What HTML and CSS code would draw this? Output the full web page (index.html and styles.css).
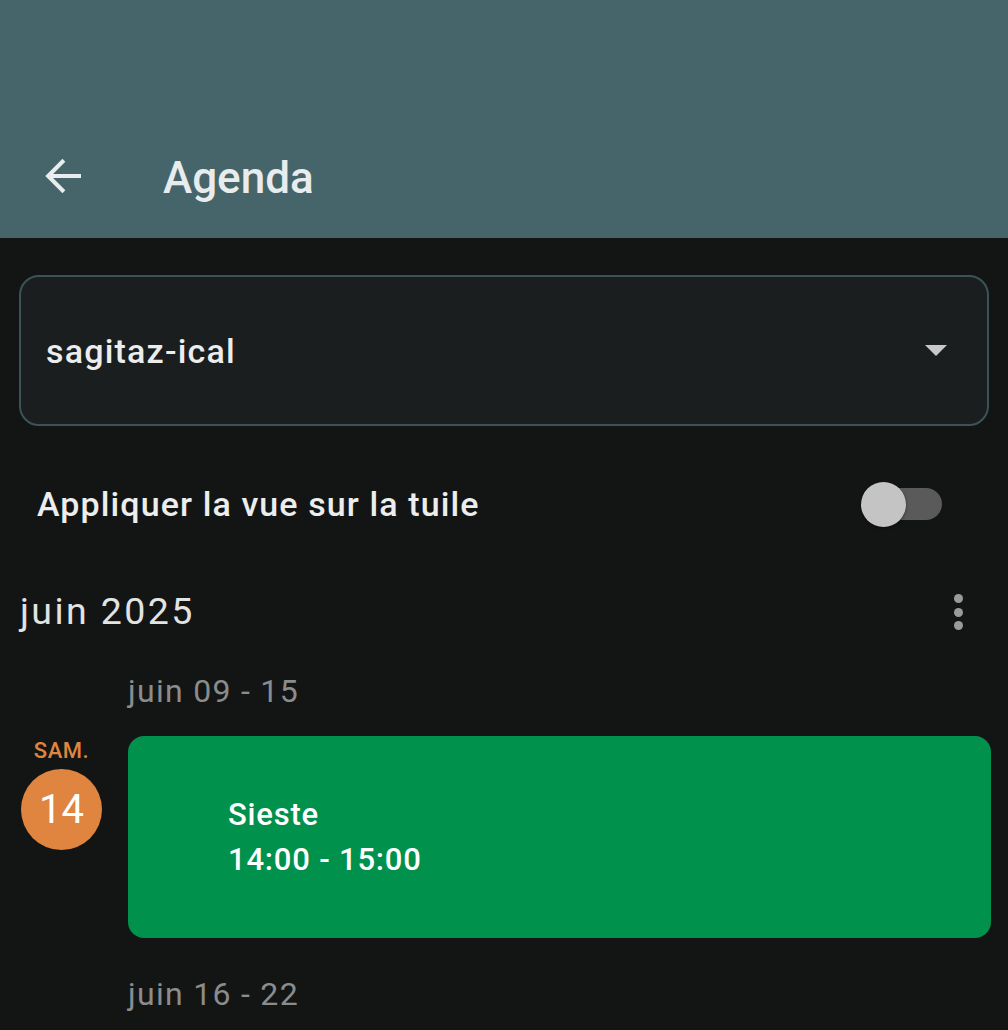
FILE: index.html
```html
<!DOCTYPE html>
<html lang="fr">
<head>
<meta charset="utf-8">
<title>Agenda</title>
<link rel="stylesheet" href="styles.css">
</head>
<body>
<header class="appbar">
  <div class="toolbar">
    <svg class="back" width="54" height="54" viewBox="0 0 24 24"><path d="M20 12H5.6M12.4 5L5.4 12l7 7" fill="none" stroke="#e8eced" stroke-width="1.8"/></svg>
    <h1 class="title">Agenda</h1>
  </div>
</header>
<main class="content">
  <div class="select">
    <span class="select-text">sagitaz-ical</span>
    <svg class="caret" width="22" height="11" viewBox="0 0 22 11"><path d="M0 0h22L11 11z" fill="#c8c8c8"/></svg>
  </div>
  <div class="toggle-row">
    <span class="toggle-label">Appliquer la vue sur la tuile</span>
    <span class="switch"><span class="thumb"></span></span>
  </div>
  <div class="month-row">
    <span class="month">juin 2025</span>
    <span class="kebab"><i></i><i></i><i></i></span>
  </div>
  <div class="week">juin 09 - 15</div>
  <div class="day-row">
    <div class="day">
      <span class="dow">SAM.</span>
      <span class="dnum">14</span>
    </div>
    <div class="event">
      <div class="ev-title">Sieste</div>
      <div class="ev-time">14:00 - 15:00</div>
    </div>
  </div>
  <div class="week week2">juin 16 - 22</div>
</main>
</body>
</html>
```

FILE: styles.css
```css
html, body {
  margin: 0;
  padding: 0;
  background: #131515;
  font-family: Roboto, "Noto Sans", sans-serif;
  width: 1008px;
  height: 1030px;
  overflow: hidden;
}
.appbar {
  height: 238px;
  background: #46656a;
  padding-top: 116px;
  box-sizing: border-box;
}
.toolbar {
  height: 122px;
  display: flex;
  align-items: center;
  padding-left: 36px;
}
.back {
  display: block;
  flex: none;
  position: relative;
  top: -1px;
}
.title {
  margin: 0 0 0 73px;
  font-size: 44px;
  font-weight: 500;
  color: #e8eced;
  line-height: 44px;
  position: relative;
  top: 1px;
}
.content {
  padding: 37px 19px 0 19px;
}
.select {
  height: 151px;
  box-sizing: border-box;
  border: 2px solid #3b5356;
  border-radius: 20px;
  background: #1a1e1f;
  display: flex;
  align-items: center;
  justify-content: space-between;
  padding: 0 40px 0 25px;
}
.select-text {
  font-size: 34px;
  line-height: 34px;
  font-weight: 500;
  letter-spacing: 1.2px;
  color: #eceded;
}
.caret { display: block; }
.toggle-row {
  display: flex;
  align-items: center;
  justify-content: space-between;
  height: 156px;
  padding: 0 47px 0 18px;
}
.toggle-label {
  font-size: 34px;
  line-height: 34px;
  font-weight: 500;
  letter-spacing: 1.1px;
  color: #eceded;
}
.switch {
  position: relative;
  width: 76px;
  height: 32px;
  border-radius: 16px;
  background: #5a5a5a;
}
.thumb {
  position: absolute;
  left: -5px;
  top: -6px;
  width: 45px;
  height: 45px;
  border-radius: 50%;
  background: #c4c4c4;
  box-shadow: 0 1px 3px rgba(0,0,0,0.5);
}
.month-row {
  display: flex;
  align-items: center;
  justify-content: space-between;
  height: 60px;
  padding: 0 26px 0 1px;
}
.month {
  font-size: 37.5px;
  line-height: 37.5px;
  font-weight: 400;
  letter-spacing: 2.4px;
  color: #e2e3e3;
}
.kebab {
  display: flex;
  flex-direction: column;
  gap: 4.5px;
}
.kebab i {
  display: block;
  width: 9px;
  height: 9px;
  border-radius: 50%;
  background: #9a9a9a;
}
.week {
  font-size: 32px;
  line-height: 44px;
  letter-spacing: 1.3px;
  color: #8b8c8c;
  padding-left: 109px;
  margin-top: 27px;
}
.day-row {
  display: flex;
  margin-top: 23px;
  gap: 26px;
}
.day {
  width: 81px;
  display: flex;
  flex-direction: column;
  align-items: center;
  padding-left: 2px;
  flex: none;
}
.dow {
  font-size: 22px;
  font-weight: 500;
  color: #df8540;
  line-height: 24px;
  margin-top: 2.5px;
  letter-spacing: 0.5px;
}
.dnum {
  margin-top: 6.5px;
  width: 81px;
  height: 81px;
  border-radius: 50%;
  background: #df8540;
  color: #ffffff;
  font-size: 40px;
  line-height: 40px;
  display: flex;
  align-items: center;
  justify-content: center;
}
.event {
  flex: 1;
  height: 202px;
  margin-right: -2px;
  background: #00914d;
  border-radius: 16px;
  box-sizing: border-box;
  padding: 62px 0 0 100px;
  color: #ffffff;
  font-weight: 500;
  font-size: 31px;
  letter-spacing: 0.8px;
}
.ev-title { line-height: 34px; }
.ev-time { line-height: 34px; margin-top: 11px; }
.week2 { margin-top: 34px; }
```
